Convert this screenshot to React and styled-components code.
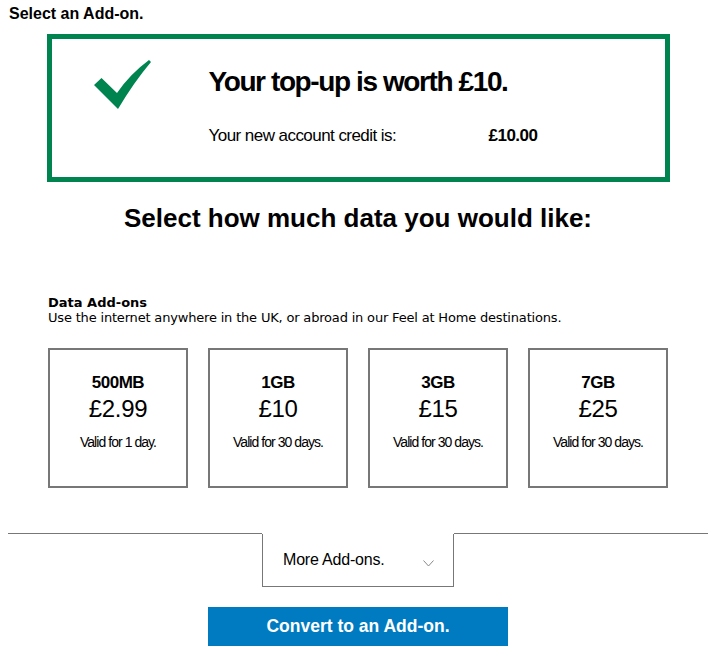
import React from 'react';
import styled, { createGlobalStyle } from 'styled-components';

const GlobalStyle = createGlobalStyle`
  body {
    margin: 0;
    background: #ffffff;
    font-family: "Liberation Sans", Arial, sans-serif;
    color: #000000;
  }
`;

const Page = styled.div`
  width: 700px;
  margin-left: 8px;
  padding-top: 4px;
  padding-bottom: 20px;
`;

const PageTitle = styled.h1`
  margin: 0 0 0 1px;
  font-size: 16px;
  line-height: 20px;
  font-weight: bold;
`;

const SuccessBox = styled.div`
  box-sizing: border-box;
  width: 623px;
  height: 148px;
  margin: 10px auto 0;
  border: 5px solid #00844f;
  display: flex;
  align-items: flex-start;
  padding: 20px 0 0 42px;
`;

const Tick = styled.svg`
  flex: none;
  width: 58px;
  height: 50px;
  margin-top: 1px;
`;

const SuccessText = styled.div`
  margin-left: 57px;
  padding-top: 7px;
`;

const Worth = styled.h2`
  margin: 0;
  font-size: 28px;
  line-height: 32px;
  font-weight: bold;
  letter-spacing: -1.4px;
`;

const CreditRow = styled.div`
  display: grid;
  grid-template-columns: 280px auto;
  margin-top: 28px;
  font-size: 17px;
  line-height: 20px;
  letter-spacing: -0.55px;
`;

const CreditValue = styled.span`
  font-weight: bold;
  letter-spacing: -0.5px;
`;

const Question = styled.h2`
  margin: 22px 0 0;
  text-align: center;
  font-size: 26px;
  line-height: 28px;
  font-weight: bold;
`;

const Section = styled.section`
  width: 620px;
  margin: 63px auto 0;
`;

const SectionTitle = styled.h3`
  margin: 0;
  font-family: "DejaVu Sans", Verdana, sans-serif;
  font-size: 13px;
  line-height: 15px;
  font-weight: bold;
`;

const SectionText = styled.p`
  margin: 0;
  font-family: "DejaVu Sans", Verdana, sans-serif;
  font-size: 13px;
  line-height: 15px;
  letter-spacing: -0.18px;
`;

const Cards = styled.div`
  display: grid;
  grid-template-columns: repeat(4, 140px);
  gap: 20px;
  margin-top: 23px;
`;

const Card = styled.div`
  box-sizing: border-box;
  height: 140px;
  border: 2px solid #777777;
  display: flex;
  flex-direction: column;
  align-items: center;
  padding-top: 23px;
`;

const Size = styled.div`
  font-size: 17px;
  line-height: 20px;
  font-weight: bold;
  letter-spacing: -0.5px;
`;

const Price = styled.div`
  margin-top: 2px;
  font-size: 24px;
  line-height: 28px;
  letter-spacing: -0.3px;
`;

const Validity = styled.div`
  margin-top: 11px;
  font-size: 14px;
  line-height: 16px;
  letter-spacing: -0.95px;
`;

const MoreRow = styled.div`
  display: flex;
  margin-top: 45px;
`;

const Rule = styled.div`
  flex: 1;
  border-top: 1px solid #777777;
`;

const MoreTab = styled.button`
  box-sizing: border-box;
  width: 192px;
  height: 53px;
  border: 1px solid #777777;
  border-top: none;
  background: #ffffff;
  display: flex;
  align-items: center;
  justify-content: space-between;
  padding: 0 19px 0 20px;
  margin-top: 1px;
  font-family: "Liberation Sans", Arial, sans-serif;
  font-size: 16px;
  letter-spacing: -0.2px;
  color: #000000;
  cursor: pointer;
`;

const Chevron = styled.svg`
  width: 11px;
  height: 7px;
  margin-top: 6px;
`;

const Convert = styled.button`
  display: block;
  width: 300px;
  height: 39px;
  margin: 20px auto 0;
  border: none;
  background: #007bc1;
  color: #ffffff;
  font-family: "Liberation Sans", Arial, sans-serif;
  font-size: 17.5px;
  font-weight: bold;
  cursor: pointer;
`;

const addOns = [
  { size: '500MB', price: '£2.99', valid: 'Valid for 1 day.' },
  { size: '1GB', price: '£10', valid: 'Valid for 30 days.' },
  { size: '3GB', price: '£15', valid: 'Valid for 30 days.' },
  { size: '7GB', price: '£25', valid: 'Valid for 30 days.' },
];

export default function App() {
  return (
    <Page>
      <GlobalStyle />
      <PageTitle>Select an Add-on.</PageTitle>

      <SuccessBox>
        <Tick viewBox="0 0 58 50">
          <path
            d="M0 25 L7.5 18 L23 33 Q36 14 55 0 L57 2 Q40 22 24 49 Z"
            fill="#00844f"
          />
        </Tick>
        <SuccessText>
          <Worth>Your top-up is worth £10.</Worth>
          <CreditRow>
            <span>Your new account credit is:</span>
            <CreditValue>£10.00</CreditValue>
          </CreditRow>
        </SuccessText>
      </SuccessBox>

      <Question>Select how much data you would like:</Question>

      <Section>
        <SectionTitle>Data Add-ons</SectionTitle>
        <SectionText>
          Use the internet anywhere in the UK, or abroad in our Feel at Home destinations.
        </SectionText>
        <Cards>
          {addOns.map(a => (
            <Card key={a.size}>
              <Size>{a.size}</Size>
              <Price>{a.price}</Price>
              <Validity>{a.valid}</Validity>
            </Card>
          ))}
        </Cards>
      </Section>

      <MoreRow>
        <Rule />
        <MoreTab>
          More Add-ons.
          <Chevron viewBox="0 0 11 7">
            <polyline points="0.5,0.5 5.5,6 10.5,0.5" fill="none" stroke="#888888" strokeWidth="1" />
          </Chevron>
        </MoreTab>
        <Rule />
      </MoreRow>

      <Convert>Convert to an Add-on.</Convert>
    </Page>
  );
}
